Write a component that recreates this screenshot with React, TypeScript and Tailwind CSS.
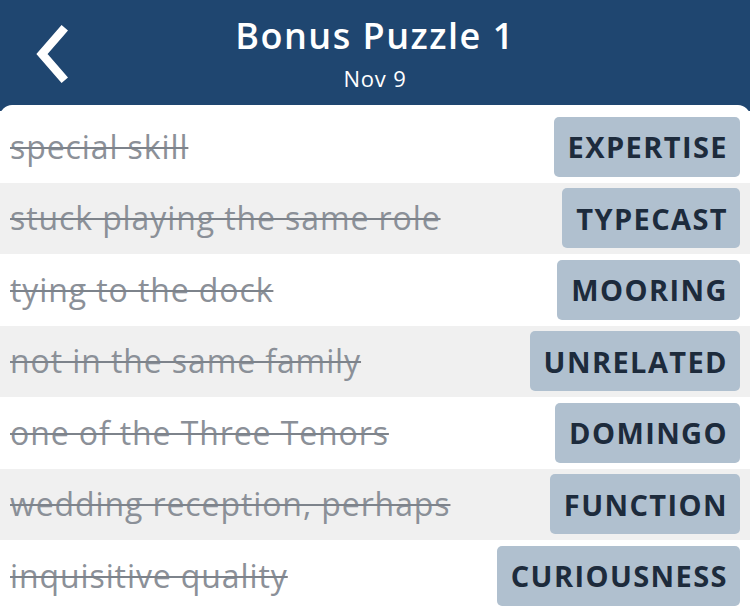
const CLUES: { clue: string; answer: string }[] = [
  { clue: 'special skill', answer: 'EXPERTISE' },
  { clue: 'stuck playing the same role', answer: 'TYPECAST' },
  { clue: 'tying to the dock', answer: 'MOORING' },
  { clue: 'not in the same family', answer: 'UNRELATED' },
  { clue: 'one of the Three Tenors', answer: 'DOMINGO' },
  { clue: 'wedding reception, perhaps', answer: 'FUNCTION' },
  { clue: 'inquisitive quality', answer: 'CURIOUSNESS' },
];

export default function App() {
  return (
    <div className="h-[611px] w-[750px] overflow-hidden bg-[#1f4670] font-['Open_Sans','Noto_Sans',sans-serif]">
      <header className="relative flex h-[105px] flex-col items-center pt-[12px] text-white">
        <button type="button" className="absolute left-[30px] top-[22px] h-[64px] w-[44px]">
          <svg viewBox="0 0 44 64" className="h-full w-full" fill="none">
            <path d="M32 9 L12 32 L32 55" stroke="white" strokeWidth="8.5" strokeLinecap="square" />
          </svg>
        </button>
        <h1 className="text-[36px] font-semibold leading-[48px] tracking-[1.5px]">Bonus Puzzle 1</h1>
        <p className="mt-[4px] text-[22px] leading-[28px] tracking-[0.8px]">Nov 9</p>
      </header>

      <div className="rounded-t-[12px] bg-white pt-[6px]">
        {CLUES.map((item, i) => (
          <div
            key={item.answer}
            className={`flex h-[71.5px] items-center justify-between pl-[10px] pr-[10px] ${
              i % 2 === 1 ? 'bg-[#f0f0f0]' : 'bg-white'
            }`}
          >
            <span className="text-[32px] tracking-[0.9px] text-[#8b9098] line-through decoration-[#7d838b] decoration-[2px]">
              {item.clue}
            </span>
            <span className="flex h-[60px] items-center rounded-[5px] bg-[#b0c0cf] pl-[14px] pr-[12px] text-[29px] font-bold tracking-[1.4px] text-[#1d2b3c]">
              {item.answer}
            </span>
          </div>
        ))}
      </div>
    </div>
  );
}
